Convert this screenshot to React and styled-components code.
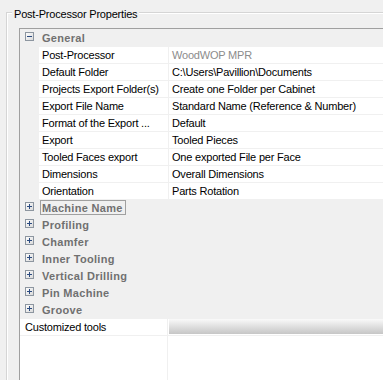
import React from 'react'
import styled, { createGlobalStyle } from 'styled-components'

const Global = createGlobalStyle`
  html, body, #root {
    margin: 0;
    height: 100%;
    overflow: hidden;
  }
  body {
    background: #f0f0f0;
    font-family: "Liberation Sans", Arial, sans-serif;
    font-size: 11px;
    letter-spacing: -0.2px;
    color: #000;
  }
`

const Page = styled.div`
  padding-top: 12px;
  height: 100%;
  box-sizing: border-box;
`

const Frame = styled.div`
  margin-left: 6px;
  height: 100%;
  border-top: 1px solid #d5d5d5;
  border-left: 1px solid #d5d5d5;
  box-shadow: inset 1px 1px 0 #ffffff;
`

const Legend = styled.div`
  width: fit-content;
  margin: -7px 0 0 5px;
  padding: 0 2px;
  line-height: 16px;
  background: #f0f0f0;
`

const Grid = styled.div`
  margin: 6px 0 0 12px;
  border-top: 1px solid #a0a0a0;
  border-left: 1px solid #a0a0a0;
  padding-top: 1px;
  background: #f0f0f0;
  height: 400px;
`

const List = styled.div`
  display: grid;
  grid-template-columns: 18px 129px 1fr;
  grid-auto-rows: 16px;
  gap: 1px;
`

const CatRow = styled.div`
  grid-column: 1 / -1;
  display: grid;
  grid-template-columns: 18px 1fr;
  background: #f0f0f0;
`

const BoxCell = styled.div`
  display: flex;
  justify-content: flex-start;
  padding: 2px 0 0 5px;
`

const CatTitle = styled.span`
  align-self: start;
  width: fit-content;
  height: 13px;
  margin-left: 2px;
  padding: 0 2px 0 1px;
  border: 1px solid ${p => (p.$focused ? '#a0a0a0' : 'transparent')};
  font-weight: bold;
  letter-spacing: 0.3px;
  line-height: 14px;
  color: #707070;
`

const Margin = styled.div`
  background: #f0f0f0;
`

const Label = styled.div`
  background: #fff;
  padding-left: 3px;
  line-height: 16px;
  white-space: nowrap;
  overflow: hidden;
`

const Value = styled.div`
  background: #fff;
  padding-left: 3px;
  line-height: 16px;
  white-space: nowrap;
  overflow: hidden;
  color: ${p => (p.$readOnly ? '#8c8c8c' : '#000')};
`

const Tools = styled.div`
  margin-top: 1px;
  display: grid;
  grid-template-columns: 147px 1fr;
  grid-template-rows: 16px 200px;
  gap: 1px;
`

const ToolLabel = styled.div`
  background: #fff;
  padding-left: 5px;
  line-height: 16px;
`

const ToolValue = styled.div`
  background: #fff;
  padding-left: 1px;
`

const Bar = styled.div`
  height: 15px;
  background: linear-gradient(#fafafa, #e2e2e2 45%, #c6c6c6);
`

const Filler = styled.div`
  background: #fff;
`

const Expander = ({ open }) => (
  <svg width="9" height="9" viewBox="0 0 9 9">
    <defs>
      <linearGradient id={open ? 'gOpen' : 'gClosed'} x1="0" y1="0" x2="1" y2="1">
        <stop offset="0" stopColor="#ffffff" />
        <stop offset="1" stopColor="#d8d8d8" />
      </linearGradient>
    </defs>
    <rect x="0.5" y="0.5" width="8" height="8" fill={`url(#${open ? 'gOpen' : 'gClosed'})`} stroke="#8d96a0" />
    <rect x="2" y="4" width="5" height="1" fill="#2b4b80" />
    {!open && <rect x="4" y="2" width="1" height="5" fill="#2b4b80" />}
  </svg>
)

const general = [
  ['Post-Processor', 'WoodWOP MPR', true],
  ['Default Folder', 'C:\\Users\\Pavillion\\Documents'],
  ['Projects Export Folder(s)', 'Create one Folder per Cabinet'],
  ['Export File Name', 'Standard Name (Reference & Number)'],
  ['Format of the Export ...', 'Default'],
  ['Export', 'Tooled Pieces'],
  ['Tooled Faces export', 'One exported File per Face'],
  ['Dimensions', 'Overall Dimensions'],
  ['Orientation', 'Parts Rotation'],
]

const collapsed = ['Machine Name', 'Profiling', 'Chamfer', 'Inner Tooling', 'Vertical Drilling', 'Pin Machine', 'Groove']

const Category = ({ title, open, focused }) => (
  <CatRow>
    <BoxCell>
      <Expander open={open} />
    </BoxCell>
    <CatTitle $focused={focused}>{title}</CatTitle>
  </CatRow>
)

export default function App() {
  return (
    <Page>
      <Global />
      <Frame>
        <Legend>Post-Processor Properties</Legend>
        <Grid>
          <List>
            <Category title="General" open />
            {general.map(([label, value, ro]) => (
              <React.Fragment key={label}>
                <Margin />
                <Label>{label}</Label>
                <Value $readOnly={ro}>{value}</Value>
              </React.Fragment>
            ))}
            {collapsed.map((c, i) => (
              <Category key={c} title={c} focused={i === 0} />
            ))}
          </List>
          <Tools>
            <ToolLabel>Customized tools</ToolLabel>
            <ToolValue>
              <Bar />
            </ToolValue>
            <Filler />
            <Filler />
          </Tools>
        </Grid>
      </Frame>
    </Page>
  )
}
